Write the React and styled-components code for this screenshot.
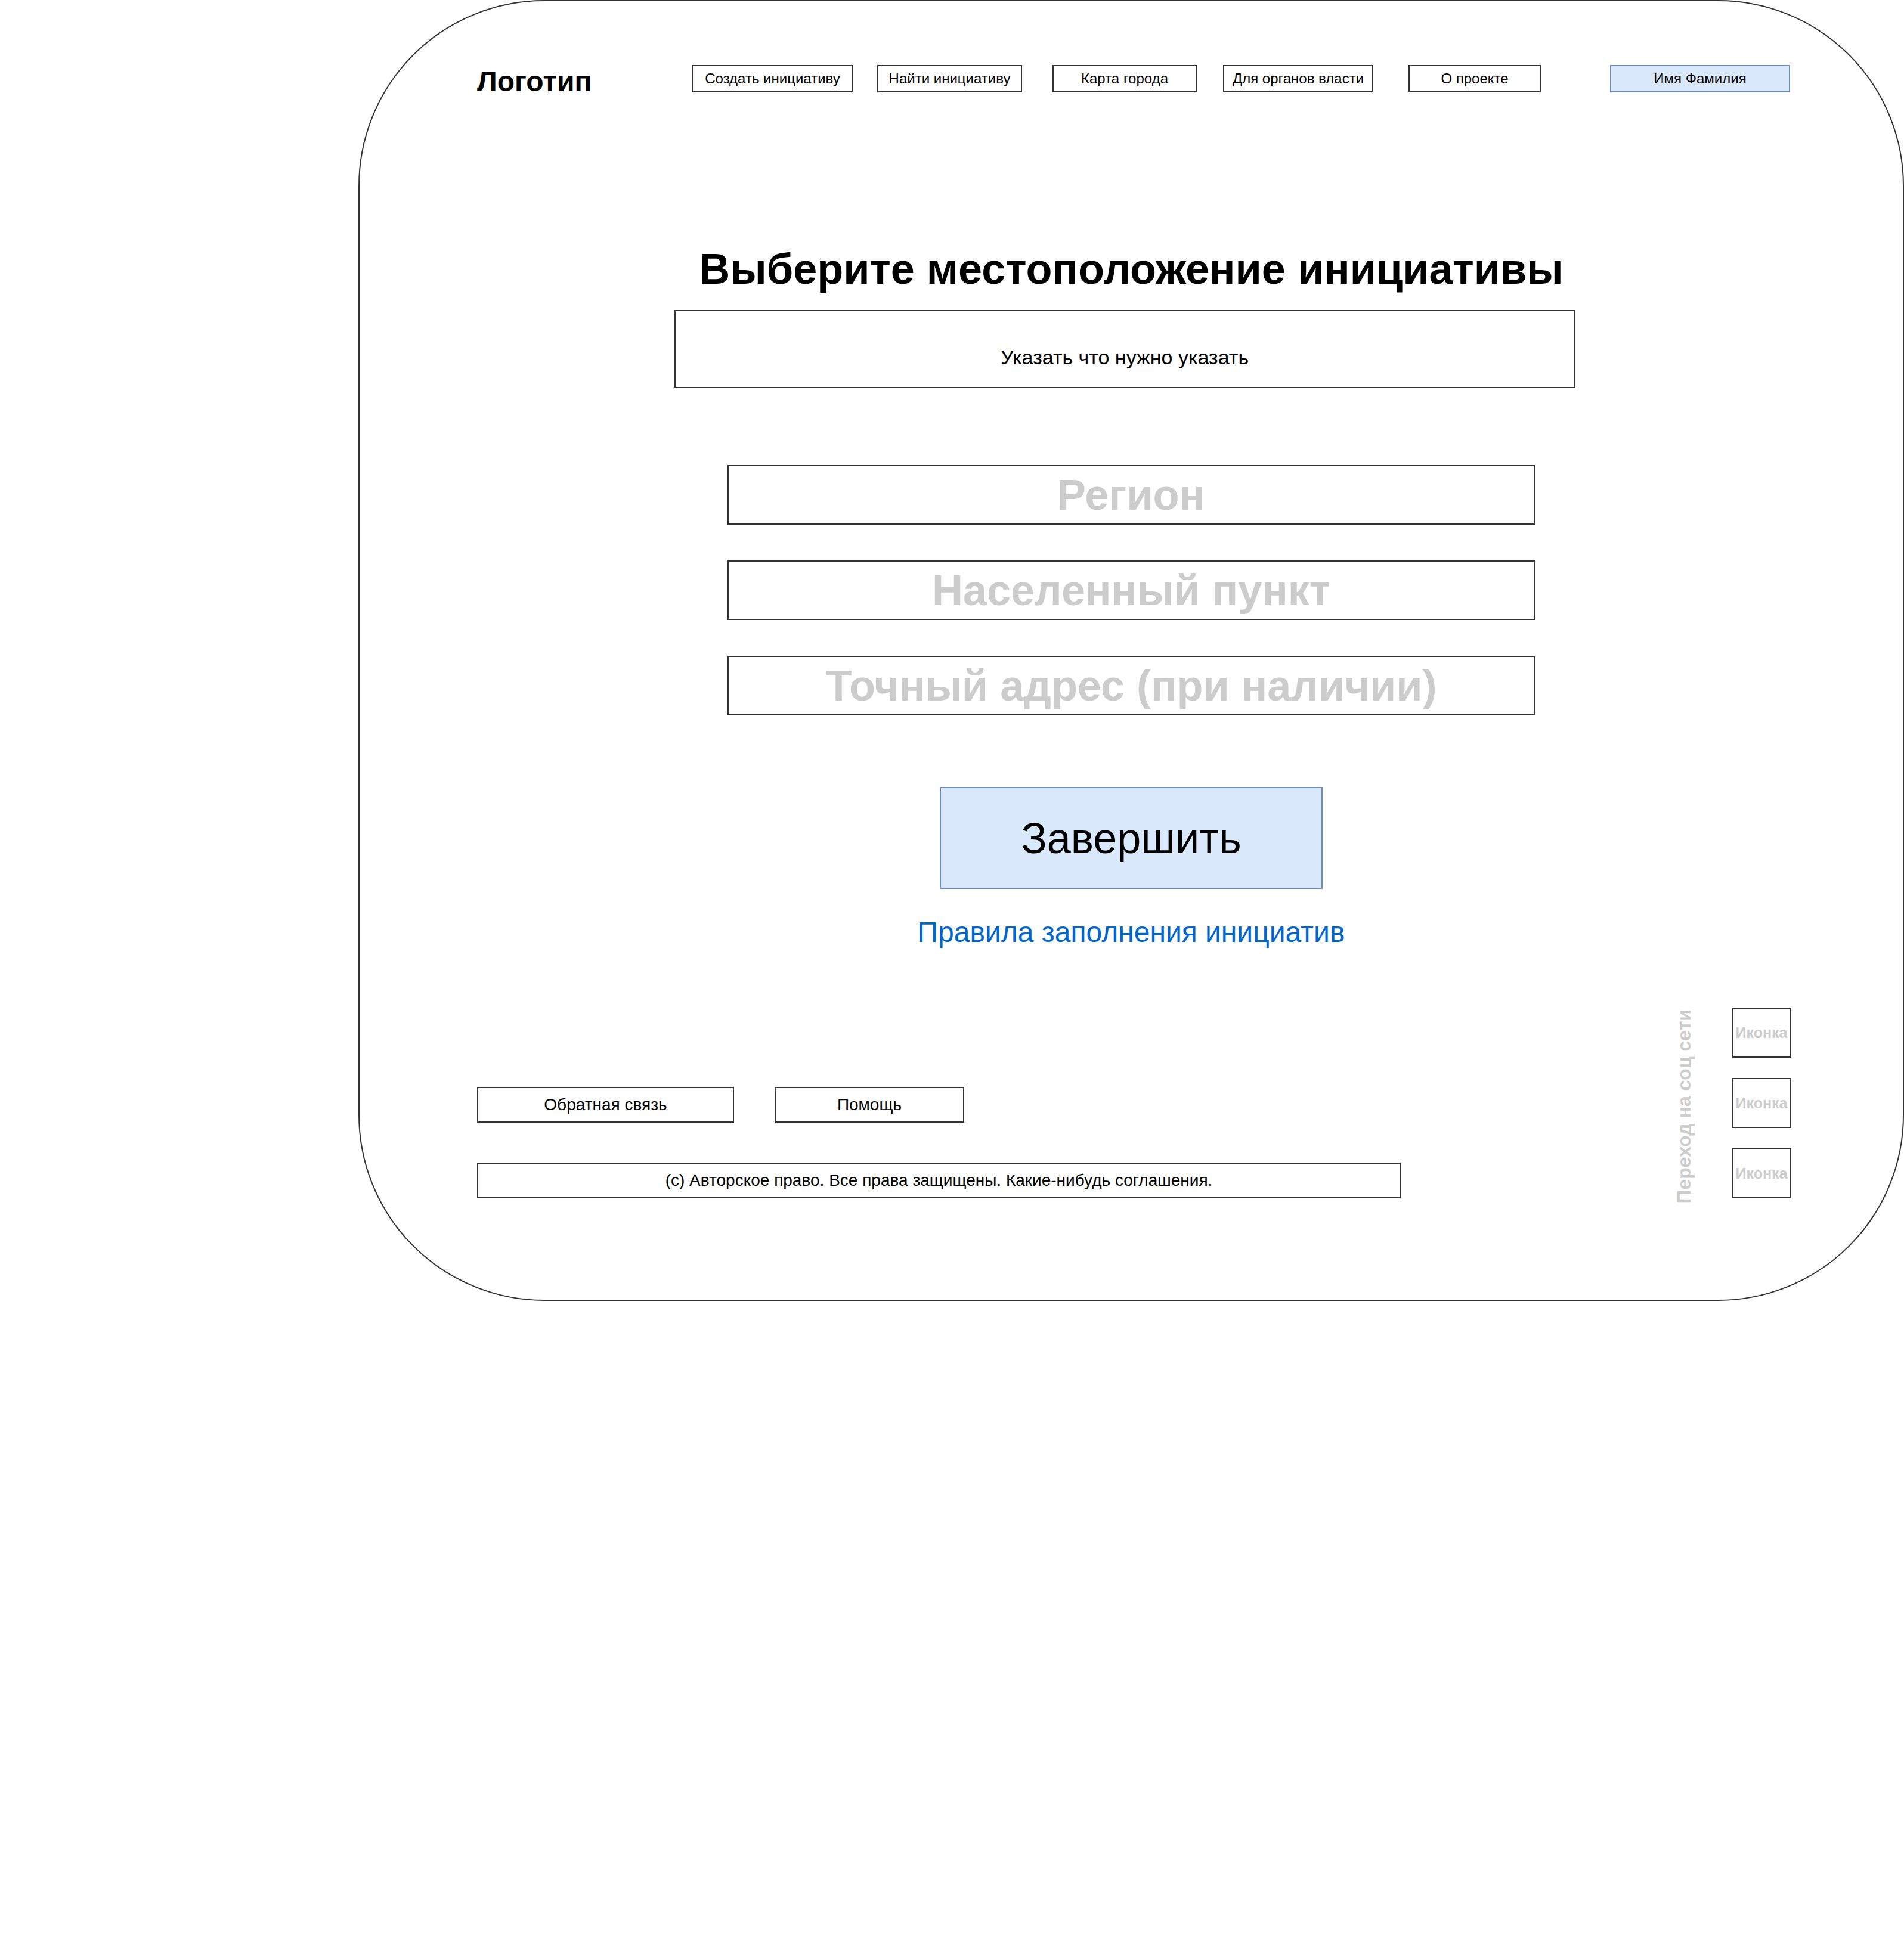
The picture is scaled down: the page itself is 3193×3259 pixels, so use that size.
import React from 'react';
import styled, { createGlobalStyle } from 'styled-components';

const GlobalStyle = createGlobalStyle`
	* {
		box-sizing: border-box;
	}
	body {
		margin: 0;
		background: #fff;
		color: #000;
		font-family: "Liberation Sans", Arial, sans-serif;
	}
`;

const navItems = [
	{ label: 'Создать инициативу', w: 271, ml: 0 },
	{ label: 'Найти инициативу', w: 243, ml: 40 },
	{ label: 'Карта города', w: 242, ml: 51 },
	{ label: 'Для органов власти', w: 252, ml: 44 },
	{ label: 'О проекте', w: 222, ml: 59 }
];

const fields = ['Регион', 'Населенный пункт', 'Точный адрес (при наличии)'];

const App = () => {
	return (
		<>
			<GlobalStyle />
			<Frame>
				<Header>
					<Logo>Логотип</Logo>
					{navItems.map((item) => (
						<NavButton key={item.label} $w={item.w} $ml={item.ml}>
							{item.label}
						</NavButton>
					))}
					<NavButton $w={302} $ml={116} $accent>
						Имя Фамилия
					</NavButton>
				</Header>

				<Title>Выберите местоположение инициативы</Title>
				<Prompt>Указать что нужно указать</Prompt>

				{fields.map((f, i) => (
					<Field key={f} $mt={i === 0 ? 129 : 60}>
						{f}
					</Field>
				))}

				<Submit>Завершить</Submit>
				<RulesLink href="#">Правила заполнения инициатив</RulesLink>

				<Footer>
					<FooterLeft>
						<FooterLinks>
							<FooterButton $w={431}>Обратная связь</FooterButton>
							<FooterButton $w={318}>Помощь</FooterButton>
						</FooterLinks>
						<Copyright>(c) Авторское право. Все права защищены. Какие-нибудь соглашения.</Copyright>
					</FooterLeft>
					<Social>
						<SocialCaption>Переход на соц сети</SocialCaption>
						<IconList>
							<IconBox>Иконка</IconBox>
							<IconBox>Иконка</IconBox>
							<IconBox>Иконка</IconBox>
						</IconList>
					</Social>
				</Footer>
			</Frame>
		</>
	);
};

const Frame = styled.div`
	margin-left: 601px;
	width: 2592px;
	height: 2182px;
	border: 2px solid #333;
	border-radius: 312px;
	display: flex;
	flex-direction: column;
	align-items: center;
`;

const Header = styled.header`
	align-self: stretch;
	display: flex;
	align-items: center;
	height: 50px;
	margin-top: 105px;
	padding-left: 197px;
`;

const Logo = styled.div`
	width: 360px;
	padding-top: 10px;
	font-size: 48px;
	font-weight: 700;
	line-height: 1;
`;

const NavButton = styled.div`
	width: ${(p) => p.$w}px;
	height: 46px;
	margin-left: ${(p) => p.$ml}px;
	display: flex;
	align-items: center;
	justify-content: center;
	background: ${(p) => (p.$accent ? '#dae8fc' : '#fff')};
	border: 2px solid ${(p) => (p.$accent ? '#6c8ebf' : '#333')};
	font-size: 24px;
	white-space: nowrap;
`;

const Title = styled.h1`
	margin: 258px 0 0;
	font-size: 72px;
	line-height: 72px;
	font-weight: 700;
`;

const Prompt = styled.div`
	margin-top: 33px;
	margin-right: 22px;
	width: 1511px;
	height: 131px;
	padding-top: 28px;
	border: 2px solid #333;
	display: flex;
	align-items: center;
	justify-content: center;
	font-size: 34px;
`;

const Field = styled.div`
	margin-top: ${(p) => p.$mt}px;
	width: 1354px;
	height: 100px;
	border: 2px solid #333;
	display: flex;
	align-items: center;
	justify-content: center;
	color: #ccc;
	font-size: 72px;
	font-weight: 700;
	line-height: 1;
`;

const Submit = styled.div`
	margin-top: 120px;
	width: 642px;
	height: 171px;
	background: #dae8fc;
	border: 2px solid #6c8ebf;
	display: flex;
	align-items: center;
	justify-content: center;
	font-size: 72px;
`;

const RulesLink = styled.a`
	margin-top: 46px;
	font-size: 48px;
	line-height: 53px;
	color: #0066cc;
	text-decoration: none;
`;

const Footer = styled.footer`
	align-self: stretch;
	margin-top: 100px;
	height: 320px;
	display: flex;
	justify-content: space-between;
	padding: 0 187px 0 197px;
`;

const FooterLeft = styled.div`
	display: flex;
	flex-direction: column;
	padding-top: 133px;
`;

const FooterLinks = styled.div`
	display: flex;
	gap: 68px;
`;

const FooterButton = styled.div`
	width: ${(p) => p.$w}px;
	height: 60px;
	border: 2px solid #333;
	display: flex;
	align-items: center;
	justify-content: center;
	font-size: 28px;
`;

const Copyright = styled.div`
	margin-top: 67px;
	width: 1549px;
	height: 60px;
	border: 2px solid #333;
	display: flex;
	align-items: center;
	justify-content: center;
	font-size: 28px;
`;

const Social = styled.div`
	display: flex;
	align-items: center;
	gap: 64px;
`;

const SocialCaption = styled.div`
	margin-top: 12px;
	writing-mode: vertical-rl;
	transform: rotate(180deg);
	color: #ccc;
	font-size: 32px;
	font-weight: 700;
	line-height: 32px;
	white-space: nowrap;
`;

const IconList = styled.div`
	display: flex;
	flex-direction: column;
	gap: 34px;
`;

const IconBox = styled.div`
	width: 100px;
	height: 84px;
	border: 2px solid #333;
	display: flex;
	align-items: center;
	justify-content: center;
	color: #ccc;
	font-size: 25px;
	font-weight: 700;
`;

export default App;
